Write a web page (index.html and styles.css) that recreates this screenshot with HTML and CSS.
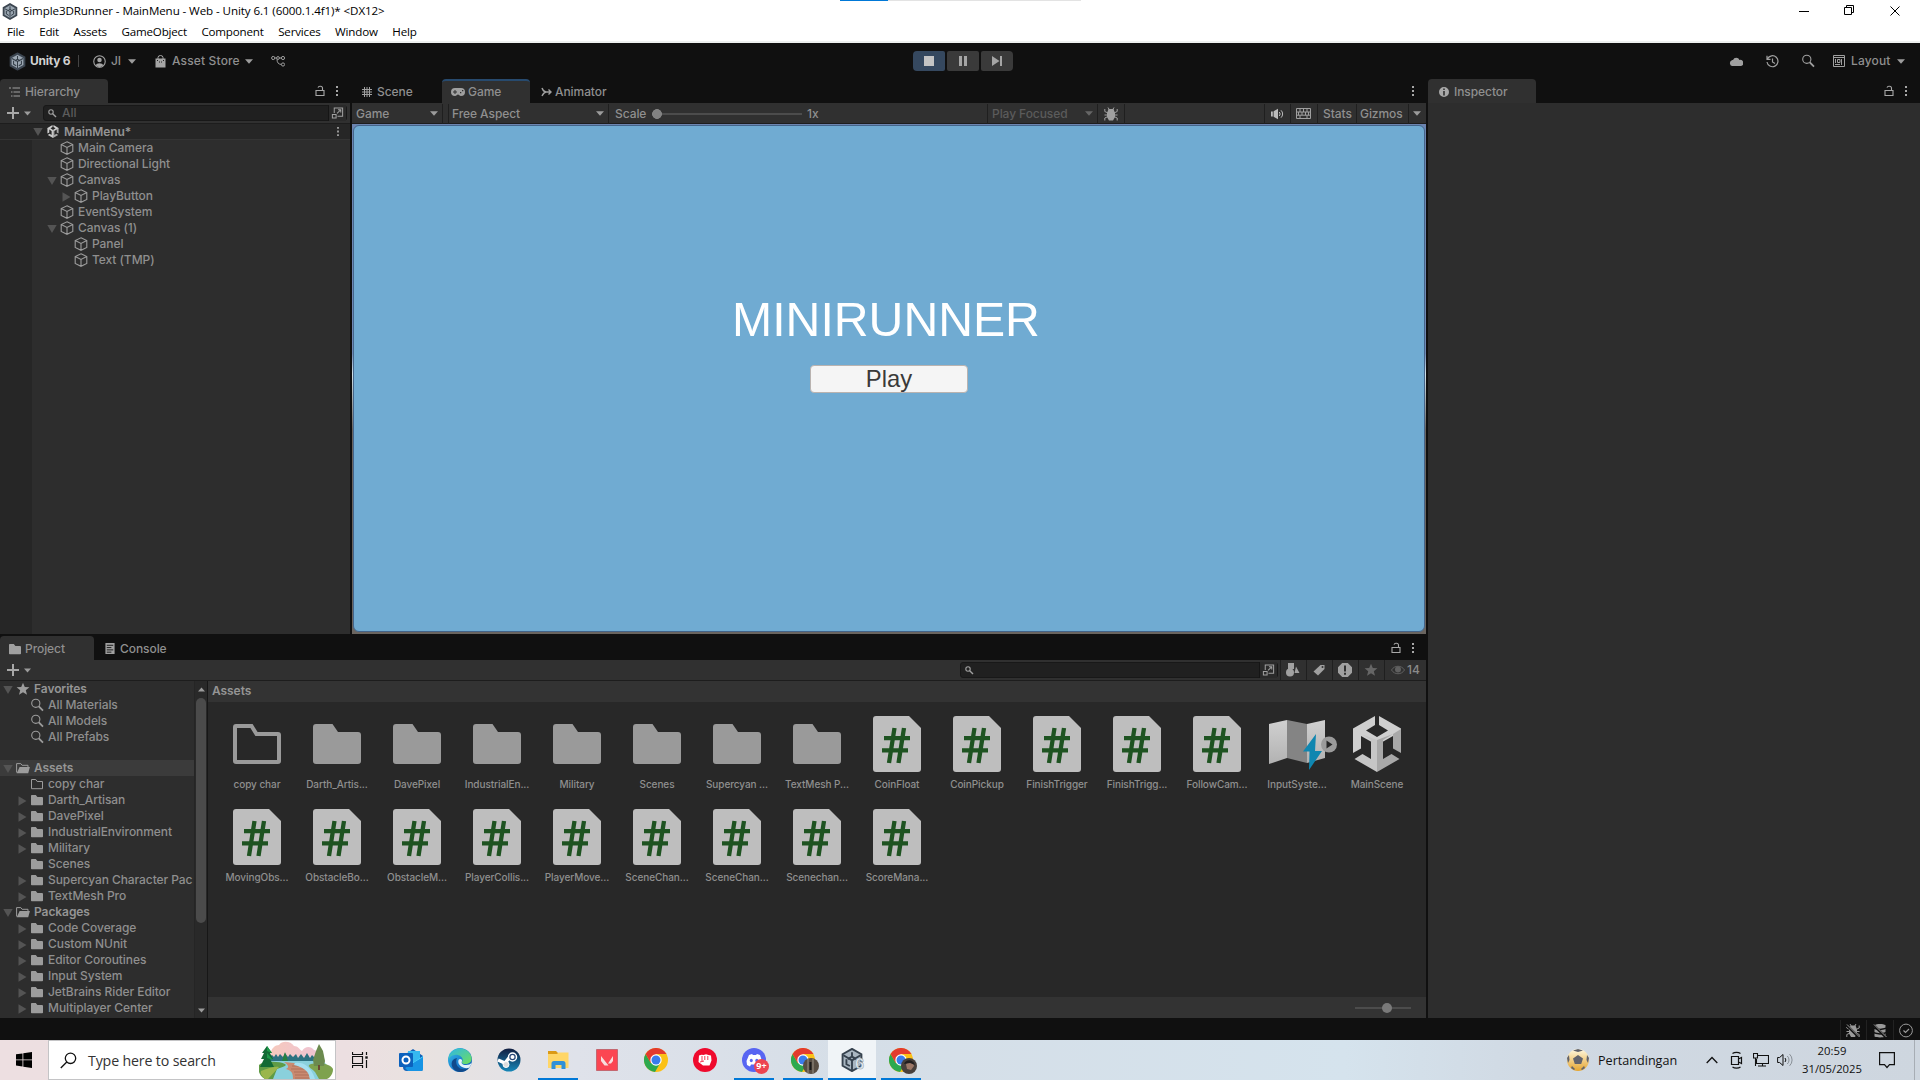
FILE: index.html
```
<!DOCTYPE html>
<html lang="en">
<head>
<meta charset="utf-8">
<title>Simple3DRunner - MainMenu - Web - Unity 6.1</title>
<link rel="stylesheet" href="styles.css">
</head>
<body>
<svg class="defs" width="0" height="0">
  <defs>
    <linearGradient id="gEdge" x1="0" y1="0" x2="1" y2="1"><stop offset="0" stop-color="#38c5e8"/><stop offset=".55" stop-color="#1b7fd0"/><stop offset="1" stop-color="#0c59a4"/></linearGradient>
    <linearGradient id="gEdge2" x1="0" y1="0" x2="1" y2="1"><stop offset="0" stop-color="#2fb6e6"/><stop offset="1" stop-color="#6fe05a"/></linearGradient>
    <linearGradient id="gSteam" x1="0" y1="0" x2="0" y2="1"><stop offset="0" stop-color="#111d40"/><stop offset="1" stop-color="#1687b8"/></linearGradient>
    <linearGradient id="gMap" x1="0" y1="0" x2="0" y2="1"><stop offset="0" stop-color="#d0d0d0"/><stop offset="1" stop-color="#b2b2b2"/></linearGradient>
    <linearGradient id="gSky" x1="0" y1="0" x2="1" y2="0"><stop offset="0" stop-color="#f6c9bd"/><stop offset="1" stop-color="#eec3d4"/></linearGradient>
    <linearGradient id="gBall" x1="0" y1="0" x2="0" y2="1"><stop offset="0" stop-color="#fff8e0"/><stop offset="1" stop-color="#e5a52e"/></linearGradient>
  </defs>
  <symbol id="down" viewBox="0 0 10 10"><path d="M.3 1h9.4L5 9z"/></symbol>
  <symbol id="right" viewBox="0 0 10 10"><path d="M1.500 .3v9.400L9.500 5z"/></symbol>
  <symbol id="drop" viewBox="0 0 8 5"><path d="M0 .3h8L4 4.700z"/></symbol>
  <symbol id="cube" viewBox="0 0 14 14"><path d="M7 .8l5.800 2.700v7L7 13.300 1.200 10.500v-7zM1.200 3.600L7 6.500l5.800-2.900M7 6.500v6.800" fill="none" stroke="currentColor" stroke-width="1.100"/></symbol>
  <symbol id="folder" viewBox="0 0 14 14"><path d="M1.800 2h4l1.600 2H12a1 1 0 0 1 1 1v6.500a.8.800 0 0 1-.8.800H1.800a.8.800 0 0 1-.8-.8V2.800A.8.800 0 0 1 1.800 2z"/></symbol>
  <symbol id="folderEmpty" viewBox="0 0 14 14"><path d="M1.500 2.500h4.200l1.500 2h5.300v7.200h-11z" fill="none" stroke="currentColor"/></symbol>
  <symbol id="folderOpen" viewBox="0 0 14 14"><path d="M.6 11.500V2.600h4.200l1.300 1.700h5.900v1.900" fill="none" stroke="currentColor"/><path d="M3.600 6h10.300l-1.700 6.200H.7z"/></symbol>
  <symbol id="star" viewBox="0 0 14 14"><path d="M7 .8l1.800 4.200 4.600.3-3.600 2.900 1.200 4.500L7 10.300l-4 2.400 1.200-4.500L.6 5.300 5.200 5z"/></symbol>
  <symbol id="lens" viewBox="0 0 14 14"><circle cx="5.800" cy="5.300" r="4.100" fill="none" stroke="currentColor" stroke-width="1.100"/><path d="M8.800 8.300l4.200 4.400" fill="none" stroke="currentColor" stroke-width="1.800"/></symbol>
  <symbol id="lensSmall" viewBox="0 0 9 9"><circle cx="3" cy="3" r="2.200" fill="none" stroke="currentColor" stroke-width="1.100"/><path d="M4.700 4.700L8 8" fill="none" stroke="currentColor" stroke-width="1.400"/></symbol>
  <symbol id="unity" viewBox="0 0 48 56"><path fill="#cfcfcf" d="M22 0v9l-9 5.500L24 21l11-6.500L26 9V0l22 12.500v3L24 29 0 15.500v-3z"/><path fill="#cfcfcf" d="M0 13l8 5v14.500L0 37z"/><path fill="#a8a8a8" d="M48 13l-8 5v14.500l8 4.500z"/><path fill="#c6c6c6" d="M24 24v32L1.500 43l8-5 8.500 5V24l-10-6z"/><path fill="#a8a8a8" d="M24 24v32l22.500-13-8-5-8.500 5V24l10-6z"/></symbol>
  <symbol id="hub" viewBox="0 0 26 28"><path d="M13 0l12 6.800v14.400L13 28 1 21.200V6.800z" fill="#3c4651"/><path d="M13 3.500l9 5v11l-9 5-9-5v-11z" fill="#9aa6b1"/><path d="M13 5.500v5l-4 2.500M13 10.500l4 2.500M4.500 9.500L13 14l8.500-4.500M13 14v10M7 13v5l4 2.500M19 13v5l-4 2.500" stroke="#333d47" stroke-width="1.600" fill="none"/></symbol>
  <symbol id="lock" viewBox="0 0 10 12"><path d="M1 5.500h8v5H1zM7.500 5.300V3.200a2 2 0 0 0-2-2H5a2 2 0 0 0-2 1.400" fill="none" stroke="currentColor" stroke-width="1.100"/></symbol>
  <symbol id="dots" viewBox="0 0 4 12"><path d="M1 1h2v2H1zM1 5h2v2H1zM1 9h2v2H1z"/></symbol>
  <symbol id="plus" viewBox="0 0 12 12"><path d="M5 0h2v5h5v2H7v5H5V7H0V5h5z"/></symbol>
  <symbol id="popout" viewBox="0 0 14 14"><path d="M3.500 7V1.500h9v9H7M1.500 8.500h4v4h-4zM6.500 7.500l4-4M7.500 3.500h3v3" fill="none" stroke="currentColor" stroke-width="1.100"/></symbol>
  <symbol id="bug" viewBox="0 0 14 14"><path d="M4.500 2h5L11 6v4l-2 3.500H5L3 10V6z"/><path d="M4 .5L5.500 3M10 .5L8.500 3M.8 2v2.500L4 6M13.200 2v2.500L10 6M.5 8h13M.8 13.500V11L4 9.500M13.200 13.500V11L10 9.500" stroke="currentColor" fill="none"/></symbol>
  <symbol id="chrome" viewBox="0 0 24 24"><circle cx="12" cy="12" r="12" fill="#fbc116"/><path d="M1.600 6A12 12 0 0 0 11 24l5.500-9.500L6.800 15z" fill="#2da94f"/><path d="M1.600 6A12 12 0 0 1 22.400 6H12l-5.200 9z" fill="#e33b2e"/><circle cx="12" cy="12" r="5.700" fill="#fff"/><circle cx="12" cy="12" r="4.500" fill="#3a7cec"/></symbol>
  <symbol id="script" viewBox="0 0 48 56"><path d="M3 0h33l12 12v41a3 3 0 0 1-3 3H3a3 3 0 0 1-3-3V3a3 3 0 0 1 3-3z" fill="#bebebe"/><path d="M21.500 12l-5.500 35M31 12l-5.500 35M11 22.200h26M9 34.300h26" stroke="#1e5321" stroke-width="4.300" fill="none"/></symbol>
  <symbol id="bigFolder" viewBox="0 0 48 56"><path d="M3 8h16.500l5.500 8h20a3 3 0 0 1 3 3v26a3 3 0 0 1-3 3H3a3 3 0 0 1-3-3V11a3 3 0 0 1 3-3z" fill="#9a9a9a"/></symbol>
  <symbol id="bigEmpty" viewBox="0 0 48 56"><path d="M3 10h15.500l5 8H45a1 1 0 0 1 1 1v26a1 1 0 0 1-1 1H3a1 1 0 0 1-1-1V11a1 1 0 0 1 1-1z" fill="none" stroke="#9a9a9a" stroke-width="4"/></symbol>
</svg>

<header class="window">
  <div class="caption">
    <svg class="app" viewBox="0 0 26 28"><use href="#hub"/></svg>
    <span class="title">Simple3DRunner - MainMenu - Web - Unity 6.1 (6000.1.4f1)* &lt;DX12&gt;</span>
    <div class="load"></div>
    <svg class="wbtns" viewBox="0 0 110 20"><path d="M4 10.500h10M49.500 6.500h7v7h-7zM51.500 6.500v-2h7v7h-2M95.500 5.500l9 9M104.500 5.500l-9 9" fill="none" stroke="#000"/></svg>
  </div>
  <nav class="menus"><span>File</span><span>Edit</span><span>Assets</span><span>GameObject</span><span>Component</span><span>Services</span><span>Window</span><span>Help</span></nav>
</header>

<div class="toolbar">
  <div class="side">
    <svg class="logo" viewBox="0 0 26 28"><use href="#hub"/></svg><b>Unity 6</b><i class="bar"></i>
    <svg class="user" viewBox="0 0 12 12"><circle cx="6" cy="6" r="5.300" fill="none" stroke="currentColor"/><circle cx="6" cy="4.600" r="2.100"/><path d="M2.300 9.500a4 3 0 0 1 7.400 0L6 11.500z"/></svg><span class="ji">JI</span><svg class="drop"><use href="#drop"/></svg>
    <svg class="bag" viewBox="0 0 11 13"><path d="M.5 3.500h10V12.500H.5z"/><path d="M3 5V2.500a2.500 2 0 0 1 5 0V5" fill="none" stroke="currentColor"/><path d="M2 5.500h1M4 7h1M6 7h1M8 5.500h1" stroke="#222"/></svg><span class="store">Asset Store</span><svg class="drop"><use href="#drop"/></svg>
    <svg class="vcs" viewBox="0 0 14 12"><g fill="none" stroke="currentColor"><circle cx="2.200" cy="3" r="1.600"/><circle cx="7" cy="3" r="1.400"/><circle cx="12" cy="3" r="1.600"/><circle cx="12" cy="9.500" r="1.600"/><path d="M3.800 3h1.800M8.400 3h2M6 4.200c0 3 1 5 4.400 5.300"/></g></svg>
  </div>
  <div class="play">
    <button class="on"><svg viewBox="0 0 10 10"><path d="M0 0h10v10H0z"/></svg></button><button><svg viewBox="0 0 10 10"><path d="M1 0h3v10H1zM6 0h3v10H6z"/></svg></button><button><svg viewBox="0 0 10 10"><path d="M0 0l7.500 5L0 10zM8 0h2v10H8z"/></svg></button>
  </div>
  <div class="side end">
    <svg class="cloud" viewBox="0 0 14 10"><path d="M3 10a3 3 0 0 1-.5-5.500C3 4 3.500 4 4 4a3.500 3.500 0 0 1 6.500 0A3 3 0 0 1 12 10z"/></svg>
    <svg class="hist" viewBox="0 0 13 13"><path d="M1.500 3.800A5.500 5.500 0 1 1 1 7M1 .8v3.500h3.500M6.500 3.500V7L9 8.500" fill="none" stroke="currentColor" stroke-width="1.200"/></svg>
    <svg class="find"><use href="#lens"/></svg>
    <svg class="lay" viewBox="0 0 12 12"><path d="M.5.500h11v11H.5zM.5 2.500h11M8.500 4v6M2 9.500h5M2.500 4v4M4.500 4.500H7v3H4.500z" fill="none" stroke="currentColor"/></svg>
    <span class="layout">Layout</span><svg class="drop"><use href="#drop"/></svg>
  </div>
</div>

<main class="editor">
  <div class="leftside">
    <div class="upper">
      <section class="hierarchy">
        <div class="tabs">
          <div class="tab cur w108"><svg class="ti" viewBox="0 0 12 12"><path d="M0 2h2M3.500 2H11M2 6h1.500M4.500 6H11M2 10h1.500M4.500 10H11" stroke="currentColor" stroke-width="1.200"/></svg>Hierarchy</div>
          <div class="acts"><svg class="lk"><use href="#lock"/></svg><svg class="dt"><use href="#dots"/></svg></div>
        </div>
        <div class="pbar hb"><svg class="plus"><use href="#plus"/></svg><svg class="drop sm"><use href="#drop"/></svg>
          <div class="search"><svg class="sl"><use href="#lensSmall"/></svg><span>All</span><svg class="pop"><use href="#popout"/></svg></div></div>
        <div class="row scene"><svg class="ar"><use href="#down"/></svg><svg class="ic u"><use href="#unity"/></svg><b>MainMenu*</b><svg class="dt"><use href="#dots"/></svg></div>
        <div class="tree">
          <div class="row l1"><svg class="ar"></svg><svg class="ic"><use href="#cube"/></svg>Main Camera</div>
          <div class="row l1"><svg class="ar"></svg><svg class="ic"><use href="#cube"/></svg>Directional Light</div>
          <div class="row l1"><svg class="ar"><use href="#down"/></svg><svg class="ic"><use href="#cube"/></svg>Canvas</div>
          <div class="row l2"><svg class="ar"><use href="#right"/></svg><svg class="ic"><use href="#cube"/></svg>PlayButton</div>
          <div class="row l1"><svg class="ar"></svg><svg class="ic"><use href="#cube"/></svg>EventSystem</div>
          <div class="row l1"><svg class="ar"><use href="#down"/></svg><svg class="ic"><use href="#cube"/></svg>Canvas (1)</div>
          <div class="row l2"><svg class="ar"></svg><svg class="ic"><use href="#cube"/></svg>Panel</div>
          <div class="row l2"><svg class="ar"></svg><svg class="ic"><use href="#cube"/></svg>Text (TMP)</div>
        </div>
      </section>
      <section class="game">
        <div class="tabs">
          <div class="tab w90"><svg class="ti" viewBox="0 0 12 12"><path d="M3.500 1v10M8.500 1v10M6 1v10M1 3.500h10M1 8.500h10M1 6h10" stroke="currentColor"/></svg>Scene</div>
          <div class="tab cur active w88"><svg class="pad" viewBox="0 0 14 8"><path fill-rule="evenodd" d="M4 0h6a4 4 0 0 1 0 8C8.500 8 8 6.500 7 6.500S5.500 8 4 8a4 4 0 0 1 0-8zM3.500 2v1.500H2v1h1.500V6h1V4.500H6v-1H4.500V2zM11 2v1.300h1.300V2zM9 4v1.300h1.300V4z"/></svg>Game</div>
          <div class="tab w90"><svg class="anim" viewBox="0 0 11 10"><path d="M1 1c1 3 2 3.800 4 4h5M1 9c1-2 2-3.800 4-4M7.500 2.500L10 5 7.500 7.500" fill="none" stroke="currentColor" stroke-width="1.400"/></svg>Animator</div>
          <div class="acts"><svg class="dt"><use href="#dots"/></svg></div>
        </div>
        <div class="pbar gb">
          <div class="cell c1">Game<svg class="drop"><use href="#drop"/></svg></div>
          <div class="cell gap"></div>
          <div class="cell c2">Free Aspect<svg class="drop"><use href="#drop"/></svg></div>
          <div class="cell c3"><span class="scale">Scale</span><div class="slide"></div><span>1x</span></div>
          <div class="cell c4">Play Focused<svg class="drop"><use href="#drop"/></svg></div>
          <div class="cell c5"><svg class="i14"><use href="#bug"/></svg></div>
          <div class="cell c6"></div>
          <div class="cell c7"><svg class="snd" viewBox="0 0 13 12"><path d="M0 3.500h1.800v5H0zM2.600 3.300L7 .8v10.400L2.600 8.700z"/><path d="M8.300 4a3 3 0 0 1 0 4M10 2.300a5 5 0 0 1 0 7.400" fill="none" stroke="currentColor"/></svg></div>
          <div class="cell c8"><svg class="kb" viewBox="0 0 15 11"><path d="M.5.500h14v10H.5zM.5 4h14M.5 7.200h14M4 .5V4M7.500.5V4M11 .5V4M2.500 4v3.200M6 4v3.200M9.500 4v3.200M12.500 4v3.200M4 7.200v3M11 7.200v3" fill="none" stroke="currentColor"/></svg></div>
          <div class="cell c9">Stats</div>
          <div class="cell c10">Gizmos</div>
          <div class="cell c11"><svg class="drop"><use href="#drop"/></svg></div>
        </div>
        <div class="view"><div class="screen"><h1>MINIRUNNER</h1><div class="playbtn">Play</div></div></div>
      </section>
    </div>
    <section class="project">
      <div class="tabs">
        <div class="tab cur w94"><svg class="ti fl"><use href="#folder"/></svg>Project</div>
        <div class="tab w90 con"><svg class="cn" viewBox="0 0 10 12"><path d="M0 0h10v12H0z"/><path d="M1.500 2.500h7M1.500 5h5M1.500 7.500h7M1.500 10h5" stroke="#111"/></svg>Console</div>
        <div class="acts"><svg class="lk"><use href="#lock"/></svg><svg class="dt"><use href="#dots"/></svg></div>
      </div>
      <div class="pbar pb"><svg class="plus"><use href="#plus"/></svg><svg class="drop sm"><use href="#drop"/></svg>
        <div class="search ps"><svg class="sl"><use href="#lensSmall"/></svg><svg class="pop"><use href="#popout"/></svg></div>
        <div class="cell p26"><svg class="i14" viewBox="0 0 14 14"><path d="M2 0h6v6H2zM10 3.500L13.500 10h-5z"/><circle cx="4" cy="9.500" r="4"/></svg></div>
        <div class="cell p26"><svg class="i14" viewBox="0 0 14 14"><path d="M8.500 2h4v4L6 12.500 1.500 8.500z"/><circle cx="10.500" cy="4" r="1" fill="#303030"/></svg></div>
        <div class="cell p26"><svg class="i14" viewBox="0 0 14 14"><path fill-rule="evenodd" d="M4.200 0h5.600L14 4.200v5.600L9.800 14H4.200L0 9.800V4.200zM6 2.500h2V8.500H6zM6 9.800h2v2H6z"/></svg></div>
        <div class="cell p26 dim"><svg class="i14"><use href="#star"/></svg></div>
        <div class="cell eye"><svg viewBox="0 0 14 10"><path d="M.5 5C3.500 0 10.500 0 13.500 5 10.500 10 3.500 10 .5 5z" fill="none" stroke="currentColor"/><circle cx="7" cy="4.500" r="3"/></svg><span>14</span></div>
      </div>
      <div class="pbody">
        <div class="ptree">
          <div class="row l0"><svg class="ar"><use href="#down"/></svg><svg class="ic"><use href="#star"/></svg><b>Favorites</b></div>
          <div class="row p1"><svg class="ar"></svg><svg class="ic"><use href="#lens"/></svg>All Materials</div>
          <div class="row p1"><svg class="ar"></svg><svg class="ic"><use href="#lens"/></svg>All Models</div>
          <div class="row p1"><svg class="ar"></svg><svg class="ic"><use href="#lens"/></svg>All Prefabs</div>
          <div class="row l0 sel"><svg class="ar"><use href="#down"/></svg><svg class="ic"><use href="#folderOpen"/></svg><b>Assets</b></div>
          <div class="row p1"><svg class="ar"></svg><svg class="ic"><use href="#folderEmpty"/></svg>copy char</div>
          <div class="row p1"><svg class="ar"><use href="#right"/></svg><svg class="ic"><use href="#folder"/></svg>Darth_Artisan</div>
          <div class="row p1"><svg class="ar"><use href="#right"/></svg><svg class="ic"><use href="#folder"/></svg>DavePixel</div>
          <div class="row p1"><svg class="ar"><use href="#right"/></svg><svg class="ic"><use href="#folder"/></svg>IndustrialEnvironment</div>
          <div class="row p1"><svg class="ar"><use href="#right"/></svg><svg class="ic"><use href="#folder"/></svg>Military</div>
          <div class="row p1"><svg class="ar"></svg><svg class="ic"><use href="#folder"/></svg>Scenes</div>
          <div class="row p1"><svg class="ar"><use href="#right"/></svg><svg class="ic"><use href="#folder"/></svg>Supercyan Character Pac</div>
          <div class="row p1"><svg class="ar"><use href="#right"/></svg><svg class="ic"><use href="#folder"/></svg>TextMesh Pro</div>
          <div class="row l0"><svg class="ar"><use href="#down"/></svg><svg class="ic"><use href="#folderOpen"/></svg><b>Packages</b></div>
          <div class="row p1"><svg class="ar"><use href="#right"/></svg><svg class="ic"><use href="#folder"/></svg>Code Coverage</div>
          <div class="row p1"><svg class="ar"><use href="#right"/></svg><svg class="ic"><use href="#folder"/></svg>Custom NUnit</div>
          <div class="row p1"><svg class="ar"><use href="#right"/></svg><svg class="ic"><use href="#folder"/></svg>Editor Coroutines</div>
          <div class="row p1"><svg class="ar"><use href="#right"/></svg><svg class="ic"><use href="#folder"/></svg>Input System</div>
          <div class="row p1"><svg class="ar"><use href="#right"/></svg><svg class="ic"><use href="#folder"/></svg>JetBrains Rider Editor</div>
          <div class="row p1"><svg class="ar"><use href="#right"/></svg><svg class="ic"><use href="#folder"/></svg>Multiplayer Center</div>
        </div>
        <div class="scroll"><svg class="drop up"><use href="#drop"/></svg><div class="thumb"></div><svg class="drop"><use href="#drop"/></svg></div>
        <div class="browser">
          <div class="crumb">Assets</div>
          <div class="grid">
            <div class="item"><svg><use href="#bigEmpty"/></svg><span>copy char</span></div>
            <div class="item"><svg><use href="#bigFolder"/></svg><span>Darth_Artis...</span></div>
            <div class="item"><svg><use href="#bigFolder"/></svg><span>DavePixel</span></div>
            <div class="item"><svg><use href="#bigFolder"/></svg><span>IndustrialEn...</span></div>
            <div class="item"><svg><use href="#bigFolder"/></svg><span>Military</span></div>
            <div class="item"><svg><use href="#bigFolder"/></svg><span>Scenes</span></div>
            <div class="item"><svg><use href="#bigFolder"/></svg><span>Supercyan ...</span></div>
            <div class="item"><svg><use href="#bigFolder"/></svg><span>TextMesh P...</span></div>
            <div class="item"><svg><use href="#script"/></svg><span>CoinFloat</span></div>
            <div class="item"><svg><use href="#script"/></svg><span>CoinPickup</span></div>
            <div class="item"><svg><use href="#script"/></svg><span>FinishTrigger</span></div>
            <div class="item"><svg><use href="#script"/></svg><span>FinishTrigg...</span></div>
            <div class="item"><svg><use href="#script"/></svg><span>FollowCam...</span></div>
            <div class="item"><svg class="map" viewBox="0 0 72 56"><path d="M8 8l18-4v38L8 48z" fill="url(#gMap)"/><path d="M26 4l20 4v39l-20-5z" fill="#848484"/><path d="M46 8l18-4v38l-18 5z" fill="url(#gMap)"/><path d="M55 18L42 35.500h6.500L48 54l13-19h-7z" fill="#0f86b0"/><circle cx="68" cy="28.500" r="8" fill="#9b9b9b"/><path d="M65.500 24.500v8l6-4z" fill="#262626"/></svg><span>InputSyste...</span></div>
            <div class="item"><svg><use href="#unity"/></svg><span>MainScene</span></div>
            <div class="item"><svg><use href="#script"/></svg><span>MovingObs...</span></div>
            <div class="item"><svg><use href="#script"/></svg><span>ObstacleBo...</span></div>
            <div class="item"><svg><use href="#script"/></svg><span>ObstacleM...</span></div>
            <div class="item"><svg><use href="#script"/></svg><span>PlayerCollis...</span></div>
            <div class="item"><svg><use href="#script"/></svg><span>PlayerMove...</span></div>
            <div class="item"><svg><use href="#script"/></svg><span>SceneChan...</span></div>
            <div class="item"><svg><use href="#script"/></svg><span>SceneChan...</span></div>
            <div class="item"><svg><use href="#script"/></svg><span>Scenechan...</span></div>
            <div class="item"><svg><use href="#script"/></svg><span>ScoreMana...</span></div>
          </div>
          <div class="sizer"><svg viewBox="0 0 56 12"><path d="M0 6h56" stroke="#4c4c4c" stroke-width="2"/><circle cx="32" cy="6" r="5" fill="#7a7a7a"/></svg></div>
        </div>
      </div>
    </section>
  </div>
  <section class="inspector">
    <div class="tabs">
      <div class="tab cur w108"><svg class="inf" viewBox="0 0 10 10"><path fill-rule="evenodd" d="M5 0a5 5 0 1 1 0 10A5 5 0 0 1 5 0zM4.200 1.500v1.500h1.600V1.500zM4.200 4v4.500h1.600V4z"/></svg>Inspector</div>
      <div class="acts"><svg class="lk"><use href="#lock"/></svg><svg class="dt"><use href="#dots"/></svg></div>
    </div>
    <div class="blank"></div>
  </section>
</main>

<div class="status">
  <div><svg viewBox="0 0 14 14"><use href="#bug"/><path d="M0 1l13 13" stroke="#111" stroke-width="2.500"/><path d="M1 1l12.500 12.500" stroke="currentColor"/></svg></div>
  <div><svg viewBox="0 0 14 14"><path d="M1.500 1.500C4 0 10 0 12.500 1.500V4c-3 1.500-8 1.500-11 0zM1.500 5.500c3 1.500 8 1.500 11 0v3c-3 1.500-8 1.500-11 0zM1.500 10c3 1.500 8 1.500 11 0v3c-3 1.200-8 1.200-11 0z"/><path d="M0 1l13 13" stroke="#111" stroke-width="2.500"/><path d="M1 1l12.500 12.500" stroke="currentColor"/></svg></div>
  <div><svg viewBox="0 0 14 14"><circle cx="7" cy="7" r="6.400" fill="none" stroke="currentColor"/><path d="M4.500 7l2 2L10 5.500" fill="none" stroke="currentColor" stroke-width="1.200"/></svg></div>
</div>

<footer class="taskbar">
  <div class="start"><svg viewBox="0 0 16 16"><path d="M0 2.300L6.500 1.400v6.100H0zM7.300 1.300L16 0v7.500H7.300zM0 8.300h6.500v6.200L0 13.600zM7.300 8.300H16V16l-8.700-1.300z"/></svg></div>
  <div class="find-box">
    <svg class="mag" viewBox="0 0 17 17"><circle cx="10.500" cy="6.300" r="5.200" fill="none" stroke="#111" stroke-width="1.300"/><path d="M6.800 10L.8 16" stroke="#111" stroke-width="1.300"/></svg>
    <span>Type here to search</span>
    <svg class="scenery" viewBox="0 0 74 38">
      <path d="M12 18C10 8 16 4 20 4c3-5 12-4 15 1 4 0 5 3 8 5 3-5 9-5 12-1 6 1 8 9 7 12z" fill="url(#gSky)"/>
      <path d="M10 22v-6l3-2 2 2 2-3 2 3 2-3 3 3 2-4 3 4 2-3 3 3 3-3 2 4 3-4 3 4 3-5 3 5 2-3 3 3 3-4 3 5v9H10z" fill="#2d7180"/>
      <path d="M10 20h54l10 10-10 8H6l-4-6z" fill="#8ad0dc"/>
      <path d="M0 24c4-4 20-4 26-1 3 2-4 3-8 5l-4 10H6C-1 34-1 28 0 24z" fill="#5f9b45"/><path d="M2 30c6-2 12-5 18-4L9 38H6C3 35 1 33 2 30z" fill="#9ab64c"/>
      <path d="M74 28c-2-5-14-7-22-5-6 2 2 5 4 8l4 7h8c4-2 6-6 6-10z" fill="#7ea24d"/>
      <path d="M25 21l10 1 5 3c8 2 10 6 11 13H34c0-6-1-8-7-10 4-2 2-4-2-7z" fill="#c98a70"/><path d="M33 25h7M32 28h14M35 31h14M36 34h14M36 37h14" stroke="#a5644f" stroke-width=".7"/>
      <path d="M36 22c8-1 16 3 20 16h-5c-1-9-8-12-16-14z" fill="#a4dff0"/>
      <path d="M8 5l5 7-2 0 3 6-3 0 4 8H1l4-8-3 0 3-6-2 0z" fill="#126a35"/><path d="M8 5l5 7-5-2zM8 12l6 7-6-2z" fill="#1d9a49"/><path d="M60 3l4 7 2 10-1 5H55l-1-6 3-9z" fill="#6b8a4e"/><path d="M59 24h2v5h-2z" fill="#6a4a33"/><path d="M26 11l3 9h-6z" fill="#28803f"/>
    </svg>
  </div>
  <div class="apps">
    <div class="a first"><svg class="s16" viewBox="0 0 16 16"><path d="M.5 0v2.500h10V0M.5 16v-2.500h10V16M.5 4.500h10v7H.5zM14.500 0v3M14.500 8v8" fill="none" stroke="#111" stroke-width="1.200"/><path d="M13.300 4.300h2.400v2.400h-2.400z"/></svg></div>
    <div class="a"><svg viewBox="0 0 24 24"><path d="M4 8L14 1l10 7v13a2 2 0 0 1-2 2H8a4 4 0 0 1-4-4z" fill="#1160b7"/><path d="M9 3h12v9l-6 5-6-5z" fill="#36b8f0"/><path d="M24 8v14L10 13l5 1z" fill="#50d9ff"/><path d="M6 20l18-11v12a2 2 0 0 1-2 2H9z" fill="#1794e4"/><rect x="0" y="5" width="14" height="14" rx="1" fill="#0b61bd"/><circle cx="7" cy="12" r="3.500" fill="none" stroke="#fff" stroke-width="2"/></svg></div>
    <div class="a"><svg viewBox="0 0 24 24"><circle cx="12" cy="12" r="12" fill="url(#gEdge)"/><path d="M1 8C5-2 20-2 23.500 9c1 5-3 7-6 7-4 0-4-2-3-3 1-4-4-7-8-6-3 .5-5 2-6 5z" fill="url(#gEdge2)"/><path d="M9 10c-3 7 3 14 12 10-3 4-9 5-13 3C2 19 2 11 9 10z" fill="#114a8b"/><path d="M14 13c-1 2 0 4 4 4 3 0 4-1 5.500-2-.5 2-1.500 4-3 5C15 21 9 17 10.500 12c1-2 4-1 3.500 1z" fill="#e3f2fa"/></svg></div>
    <div class="a"><svg viewBox="0 0 24 24"><circle cx="12" cy="12" r="11.500" fill="url(#gSteam)"/><path d="M1 12l7 3 4-5" stroke="#fff" stroke-width="3.500" fill="none"/><circle cx="15.500" cy="9" r="4" fill="#274778" stroke="#fff" stroke-width="1.500"/><circle cx="15.500" cy="9" r="2" fill="#fff"/><circle cx="9" cy="16.500" r="3" fill="#ddd" stroke="#fff"/></svg></div>
    <div class="a run"><svg viewBox="0 0 24 24"><path d="M2 3h8l2 2h9v5H2z" fill="#db9a15"/><path d="M2 6h9l1.500-1.500H22.500V20H2z" fill="#ffd667"/><path d="M5.500 21v-5.500a2.500 2.500 0 0 1 2.500-2.500h9a2.500 2.500 0 0 1 2.500 2.500V21h-4v-4h-6v4z" fill="#2f90d8"/></svg></div>
    <div class="a"><svg viewBox="0 0 24 24"><path d="M1.500 1.500h21v21h-21z" fill="#fb4652" stroke="#c56770"/><path d="M6 8l7.500 9.500h-4L6 13zM18 8v5l-2 2.500h-3z" fill="#f7dedd"/></svg></div>
    <div class="a"><svg><use href="#chrome"/></svg></div>
    <div class="a"><svg viewBox="0 0 24 24"><circle cx="12" cy="12" r="12" fill="#ef0a2d"/><path d="M6 7.500l2.500-.8 2 .3 2.500-.7 2.500.7 2.500.5.500 5-2 5H10l-4.500-3.500z" fill="#fff"/><path d="M9 8v5M11.800 8v4M14.800 8v4M7 14l4-1" stroke="#ef0a2d" stroke-width=".8"/></svg></div>
    <div class="a run"><svg viewBox="0 0 24 24"><circle cx="12" cy="12" r="12" fill="#5865f2"/><path d="M7 7l3-1 1 1h3l1-1 3 1 2 6-.5 4-3.500 1.500-1-2h-6l-1 2L5 17l-.5-4z" fill="#fff"/><ellipse cx="9.300" cy="12.500" rx="1.500" ry="1.800" fill="#5865f2"/><ellipse cx="14.800" cy="12.500" rx="1.500" ry="1.800" fill="#5865f2"/></svg><em>9+</em></div>
    <div class="a run"><svg><use href="#chrome"/></svg><svg class="ava" viewBox="0 0 16 16"><circle cx="8" cy="8" r="8" fill="#574d43"/><path d="M5 1v14M10 1v14" stroke="#8a8378" stroke-width="1.300"/><path d="M6.500 4h2v8h-2z" fill="#191919"/></svg></div>
    <div class="a run wide"><svg viewBox="0 0 26 28"><path d="M13 1l11 6.300v13.400L13 27 2 20.700V7.300z" fill="#a9b6c1" stroke="#36424e" stroke-width="2.200"/><path d="M13 5v5l-5 3M13 10l5 3M3 8.500l10 6 10-6M13 14.500V26M6.500 13v6l4 2" stroke="#36424e" stroke-width="2.200" fill="none"/></svg><strong>6</strong></div>
    <div class="a run"><svg><use href="#chrome"/></svg><svg class="ava" viewBox="0 0 16 16"><circle cx="8" cy="8" r="8" fill="#48403c"/><path d="M5 6c3-3 8-1 8 2l-3 4-4-1z" fill="#9b7767"/><path d="M3 6C5 1 12 1 14 7L9 5z" fill="#211f20"/></svg></div>
  </div>
  <div class="news"><svg viewBox="0 0 22 22"><circle cx="11" cy="11" r="11" fill="url(#gBall)"/><path d="M11 6l5 3.500-1.800 5.500H7.800L6 9.500zM6 1.500l5-1.500 5 1.500L11 3zM0 9l2-3 .5 5L1 14zM22 9l-2-3-.5 5 1.500 3zM4 19l1-2 3 3-1 1zM18 19l-1-2-3 3 1 1z" fill="#62636c"/></svg><span>Pertandingan</span></div>
  <div class="tray">
    <svg class="t1" viewBox="0 0 12 8"><path d="M.7 7L6 1.500 11.300 7" fill="none" stroke="#111" stroke-width="1.300"/></svg>
    <svg class="t2" viewBox="0 0 12 18"><path d="M1 5.500h7v8H1zM8 8l3-1.500v6L8 11M2 2.500c2-1.500 6-1.500 8 0M2 16c2 1.500 6 1.500 8 0" fill="none" stroke="#111" stroke-width="1.200"/></svg>
    <svg class="t3" viewBox="0 0 16 14"><path d="M5 2.500h10.500v8H3.500V6M9.500 10.500v3M5 13h8M.5.500h4V5h-4zM2.500 5v8" fill="none" stroke="#111" stroke-width="1.100"/></svg>
    <svg class="t4" viewBox="0 0 16 14"><path d="M.6 4.500h2L6 1.500v11L2.600 9.500h-2z" fill="none" stroke="#111"/><path d="M8 5a3 3 0 0 1 0 4" fill="none" stroke="#111"/><path d="M10.300 3a5.500 5.500 0 0 1 0 8M12.600 1.200a8 8 0 0 1 0 11.600" fill="none" stroke="#888f96"/></svg>
  </div>
  <div class="clock"><span>20:59</span><span>31/05/2025</span></div>
  <svg class="note" viewBox="0 0 16 17"><path d="M.6.600h14.800v12H10.500L8 15.500l-2.500-2.900H.6z" fill="none" stroke="#111" stroke-width="1.200"/></svg>
</footer>
</body>
</html>
```
FILE: styles.css
```
* { box-sizing: border-box; }
body { margin: 0; width: 1920px; height: 1080px; overflow: hidden; display: flex; flex-direction: column; background: #101010; color: #8f8f8f; font: 500 12px/16px Inter, sans-serif; letter-spacing: -.07px; white-space: nowrap; }
.defs { position: absolute; }
svg { fill: currentColor; flex: none; display: block; }

/* window chrome */
.window { height: 43px; background: #fff; border-bottom: 2px solid #eef0ef; color: #000; font-family: "Open Sans", sans-serif; font-weight: 400; }
.caption { height: 22px; display: flex; align-items: center; padding-left: 2px; }
.app { width: 16px; height: 17px; }
.title { margin-left: 5px; width: 817px; font-size: 11.6px; letter-spacing: -.1px; padding-bottom: 1px; }
.load { align-self: flex-start; width: 241px; height: 1px; background: linear-gradient(90deg, #0078d7 48px, #e3e3e3 48px); }
.wbtns { width: 110px; height: 20px; margin-left: 714px; }
.menus { display: flex; height: 20px; align-items: center; padding-left: 7px; gap: 14.600px; font-size: 11.6px; letter-spacing: -.2px; }

.toolbar { height: 36px; display: flex; align-items: center; padding-bottom: 1px; justify-content: space-between; padding-bottom: 0; align-items: flex-start; padding-top: 8px; }
.toolbar .side { width: 913px; height: 20px; display: flex; align-items: center; padding-left: 9px; }
.logo { width: 17px; height: 19px; margin-right: 4px; }
.toolbar b { color: #d2d2d2; width: 48px; font-weight: 700; letter-spacing: -.25px; }
.toolbar .bar { width: 1px; height: 12px; background: #444; margin-right: 14px; }
.drop { width: 8px; height: 5px; color: #9c9c9c; }
.user { width: 13px; height: 13px; color: #a5a5a5; margin-right: 5px; }
.ji { width: 17px; }
.bag { width: 11px; height: 13px; margin: 0 6px 0 19px; color: #a5a5a5; }
.store { width: 73px; letter-spacing: .15px; }
.vcs { width: 14px; height: 12px; margin-left: 18px; color: #9c9c9c; }
.play { display: flex; gap: 2px; width: 101px; }
.play button { width: 32px; height: 20px; border: 0; padding: 0; background: #3a3a3a; color: #a5a5a5; display: flex; align-items: center; justify-content: center; border-radius: 2px; }
.play button:last-child { border-radius: 2px 4px 4px 2px; }
.play svg { width: 10px; height: 10px; }
.play .on { background: #35485f; color: #c4c4c4; border-radius: 4px 2px 2px 4px; }
.toolbar .end { width: 906px; justify-content: flex-end; padding: 0 15px 0 0; color: #a0a0a0; }
.cloud { width: 14px; height: 10px; margin-right: 23px; }
.hist { width: 13px; height: 13px; margin-right: 22px; }
.find { width: 14px; height: 14px; margin-right: 18px; }
.lay { width: 12px; height: 12px; margin-right: 6px; }
.layout { width: 46px; color: #8f8f8f; letter-spacing: .15px; }

/* panels */
.editor { height: 939px; display: flex; gap: 2px; }
.leftside { width: 1426px; }
.upper { height: 555px; display: flex; gap: 2px; }
.tabs { height: 24px; display: flex; }
.tab { display: flex; align-items: center; padding: 1px 0 0 9px; border-radius: 4px 4px 0 0; }
.tab.cur { background: #303030; }
.tab.active { border-top: 2px solid #274a6e; padding-top: 0; padding-bottom: 1px; }
.w108 { width: 108px; } .w94 { width: 94px; } .w90 { width: 90px; } .w88 { width: 88px; }
.ti { width: 12px; height: 12px; margin-right: 4px; color: #a0a0a0; }
.fl { width: 14px; height: 14px; margin: 0 3px 0 -1px; }
.acts { margin-left: auto; display: flex; align-items: center; gap: 10px; padding-right: 11px; color: #a8a8a8; }
.lk { width: 10px; height: 12px; }
.dt { width: 4px; height: 12px; }
.pbar { height: 21px; background: #303030; border-bottom: 1px solid #1d1d1d; display: flex; align-items: center; }
.gb { padding-top: 1px; }
.plus { width: 12px; height: 12px; margin-left: 7px; color: #a8a8a8; }
.sm { margin-left: 5px; width: 7px; }
.search { height: 16px; border: 1px solid #181818; border-radius: 3px; background: #202020; display: flex; align-items: center; padding-left: 4px; width: 304px; margin-left: 12px; color: #5c5c5c; }
.sl { width: 9px; height: 9px; color: #a0a0a0; margin-right: 5px; }
.pop { width: 18px; height: 16px; padding: 1px 2px; margin-left: auto; border-left: 1px solid #151515; background: #2a2a2a; color: #a0a0a0; }

.hierarchy { width: 350px; display: flex; flex-direction: column; background: #2d2d2d; }
.hierarchy .tabs, .game .tabs, .inspector .tabs, .project .tabs { background: #101010; }
.row { height: 16px; display: flex; align-items: center; overflow: hidden; }
.ar { width: 10px; height: 10px; margin: 1px 3px 0 -1px; color: #545454; }
.ic { width: 14px; height: 14px; margin-right: 4px; color: #9c9c9c; }
.row b { color: #959595; font-weight: 600; }
.scene { background: #262626; border-bottom: 1px solid #343434; padding-left: 34px; }
.scene .u { height: 13px; }
.scene .dt { margin: 0 10px 0 auto; height: 11px; color: #a0a0a0; }
.tree { flex: 1; background: linear-gradient(90deg, #262626 32px, #2d2d2d 32px); }
.l0 { padding-left: 4px; } .l1 { padding-left: 48px; } .l2 { padding-left: 62px; } .p1 { padding-left: 18px; }

.game { width: 1074px; }
.pad { width: 14px; height: 8px; margin-right: 3px; color: #a0a0a0; }
.anim { width: 11px; height: 10px; margin: 0 3px 0 2px; color: #a0a0a0; }
.cell { height: 20px; display: flex; align-items: center; border-right: 1px solid #1f1f1f; flex: none; }
.cell .drop { margin-left: auto; }
.c1 { width: 91px; padding: 0 4px; }
.gap { width: 6px; }
.c2 { width: 160px; padding: 0 4px 0 3px; }
.c3 { width: 379px; padding-left: 6px; }
.scale { width: 37px; }
.slide { width: 150px; height: 10px; margin-right: 5px; background: radial-gradient(circle at 5px 5px, #828282 4.6px, transparent 5.200px), linear-gradient(#4c4c4c, #4c4c4c) 5px 4px / 145px 2px no-repeat; }
.c4 { width: 110px; padding: 0 4px; color: #5b5b5b; }
.c4 .drop { color: #666; }
.c5 { width: 27px; justify-content: center; }
.c6 { width: 140px; }
.c7 { width: 26px; padding-left: 6px; color: #bcbcbc; }
.c8 { width: 27px; padding-left: 5px; color: #a0a0a0; }
.c9 { width: 39px; padding-left: 5px; }
.c10 { width: 52px; padding-left: 3px; }
.c11 { width: 16px; border: 0; padding-right: 4px; }
.i14 { width: 14px; height: 14px; color: #a0a0a0; }
.snd { width: 13px; height: 12px; } .kb { width: 15px; height: 11px; }
.view { height: 510px; padding: 1px 1px 2px; background: linear-gradient(#6c84b0, #7189b5 45%, #cfe0e8 49%, #6a6560 60%, #6a6560); }
.screen { height: 507px; border: 1px solid #44658a; border-radius: 6px; background: #70abd2; display: flex; flex-direction: column; align-items: center; font-family: "Liberation Sans", sans-serif; letter-spacing: 0; }
.screen h1 { margin: 165px 6px 0 0; font: 48.200px/56px "Liberation Sans", sans-serif; color: #fff; }
.playbtn { width: 158px; height: 28px; margin-top: 18px; background: #f5f5f5; border: 1px solid #b9b3b0; border-radius: 4px; color: #3a3a3a; font-size: 23.800px; font-weight: 400; line-height: 26px; text-align: center; }

/* project */
.project { margin-top: 2px; height: 382px; }
.con { padding-left: 11px; }
.cn { width: 10px; height: 11px; margin-right: 5px; color: #a0a0a0; }
.ps { width: 318px; margin-left: 929px; margin-right: 2px; }
.p26 { width: 26px; border-right: 0; border-left: 1px solid #1f1f1f; justify-content: center; }
.p26 svg { margin-right: 1px; }
.dim .i14 { color: #666; }
.eye { flex: 1; border-left: 1px solid #1f1f1f; border-right: 0; padding-left: 6px; color: #606060; }
.eye svg { width: 14px; height: 10px; margin-right: 2px; }
.eye span { color: #8a8a8a; }
.pbody { display: flex; height: 337px; }
.ptree { width: 194px; background: #2d2d2d; }
.ptree .sel { background: #3b3b3b; margin-top: 15px; }
.scroll { width: 14px; background: #292929; border-right: 1px solid #171717; border-left: 1px solid #252525; display: flex; flex-direction: column; align-items: center; padding: 6px 0 5px; justify-content: space-between; }
.scroll .drop { width: 7px; height: 5px; }
.up { transform: rotate(180deg); }
.thumb { width: 10px; height: 225px; border-radius: 5px; background: #4b4b4b; margin-bottom: 79px; }
.browser { flex: 1; display: flex; flex-direction: column; background: #282828; }
.crumb { height: 21px; background: #333; padding: 2px 4px; color: #959595; font-weight: 600; }
.grid { flex: 1; padding: 14px 0 0 9px; display: grid; grid-template-columns: repeat(15, 80px); grid-auto-rows: 93px; align-content: start; }
.item { display: flex; flex-direction: column; align-items: center; font-size: 10px; line-height: 14px; }
.item svg { width: 48px; height: 56px; margin-bottom: 5px; }
.item .map { width: 72px; overflow: visible; }
.sizer { height: 21px; background: #333; display: flex; align-items: center; justify-content: flex-end; padding-right: 15px; }
.sizer svg { width: 56px; height: 12px; }
.inspector { flex: 1; display: flex; flex-direction: column; }
.inspector .tab { padding-left: 11px; }
.inspector .acts { padding-right: 12px; }
.inf { width: 10px; height: 10px; margin-right: 5px; color: #a8a8a8; }
.blank { flex: 1; background: #2d2d2d; }

.status { height: 22px; display: flex; justify-content: flex-end; color: #9a9a9a; padding-right: 1px; }
.status div { width: 26.500px; margin: 2px 0 0; border-left: 1px solid #222; display: flex; align-items: center; justify-content: center; }
.status svg { width: 14px; height: 15px; }

/* taskbar */
.taskbar { height: 40px; display: flex; align-items: center; color: #111; font-family: "Open Sans", sans-serif; font-weight: 400; letter-spacing: 0; background: linear-gradient(90deg, #eddfe1, #ecdfe1 18%, #e9e2e0 22%, #dfe2ea 30%, #d5dee7 45%, #d5e3ed 70%, #d0d9e3 80%, #ced6df); }
.start { width: 48px; display: flex; justify-content: center; color: #000; }
.start svg { width: 16px; height: 16px; }
.find-box { width: 288px; height: 40px; background: #fff; border: 1px solid #c4c4c6; display: flex; align-items: center; padding-left: 11px; color: #333; font-size: 14.200px; letter-spacing: -.15px; }
.mag { width: 17px; height: 17px; }
.find-box span { margin-left: 11px; width: 171px; padding-top: 2px; }
.scenery { width: 74px; height: 38px; }
.apps { display: flex; gap: 1px; }
.a { width: 48px; height: 40px; display: flex; align-items: center; justify-content: center; position: relative; }
.a svg { width: 24px; height: 24px; }
.first { margin-right: 2px; }
.a .s16 { width: 16px; height: 16px; }
.run { background: linear-gradient(#0078d7, #0078d7) 4px 38px / 40px 2px no-repeat; }
.wide { background: linear-gradient(#f0f4f7 38px, #0078d7 38px); }
.a em { position: absolute; left: 24px; top: 19px; width: 15px; height: 15px; border-radius: 8px; background: #ed4550; color: #fff; font: 700 9px/14px "Open Sans", sans-serif; text-align: center; }
.a .ava { position: absolute; left: 24px; top: 18px; width: 16px; height: 16px; }
.a strong { position: absolute; left: 27px; top: 16px; color: #e6edf2; font: 700 14px/16px Inter, sans-serif; -webkit-text-stroke: .5px #8b98a5; }
.news { margin-left: auto; display: flex; align-items: center; gap: 9px; font-size: 12.600px; width: 139px; }
.news svg { width: 22px; height: 22px; }
.news span { padding-top: 1px; }
.tray { display: flex; align-items: center; width: 97px; }
.t1 { width: 12px; height: 8px; margin-right: 12px; } .t2 { width: 13px; height: 18px; margin-right: 10px; } .t3 { width: 16px; height: 14px; margin-right: 8px; } .t4 { width: 16px; height: 14px; }
.clock { width: 58px; display: flex; flex-direction: column; align-items: center; font-size: 11.300px; line-height: 18px; }
.note { width: 16px; height: 17px; margin: 0 19px 0 18px; }
.taskbar::after { content: ""; width: 5px; height: 40px; border-left: 1px solid #a7adb4; }
```
